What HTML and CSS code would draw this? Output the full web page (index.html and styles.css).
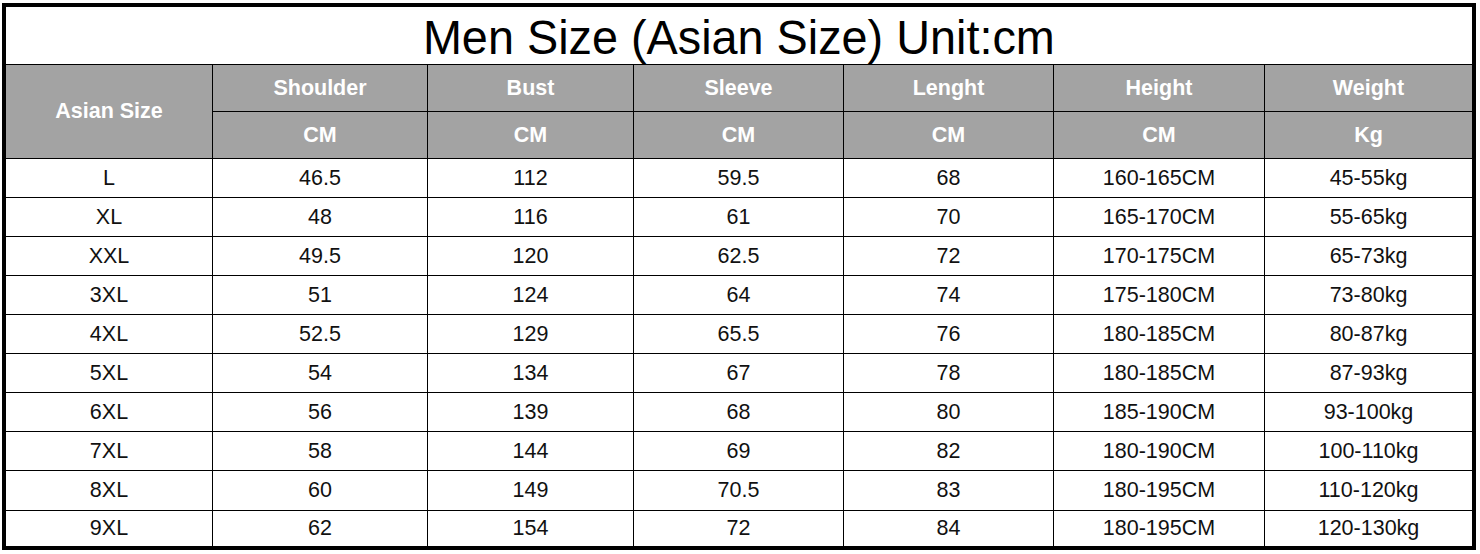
FILE: index.html
```html
<!DOCTYPE html>
<html lang="en">
<head>
<meta charset="utf-8">
<title>Men Size (Asian Size)</title>
<link rel="stylesheet" href="styles.css">
</head>
<body>
<div class="chart">
  <div class="title"><span class="title-text">Men Size (Asian Size) Unit:cm</span></div>
  <div class="hd size-hd">Asian Size</div>
  <div class="hd">Shoulder</div>
  <div class="hd">Bust</div>
  <div class="hd">Sleeve</div>
  <div class="hd">Lenght</div>
  <div class="hd">Height</div>
  <div class="hd">Weight</div>
  <div class="hd">CM</div>
  <div class="hd">CM</div>
  <div class="hd">CM</div>
  <div class="hd">CM</div>
  <div class="hd">CM</div>
  <div class="hd">Kg</div>

  <div class="c">L</div><div class="c">46.5</div><div class="c">112</div><div class="c">59.5</div><div class="c">68</div><div class="c">160-165CM</div><div class="c">45-55kg</div>
  <div class="c">XL</div><div class="c">48</div><div class="c">116</div><div class="c">61</div><div class="c">70</div><div class="c">165-170CM</div><div class="c">55-65kg</div>
  <div class="c">XXL</div><div class="c">49.5</div><div class="c">120</div><div class="c">62.5</div><div class="c">72</div><div class="c">170-175CM</div><div class="c">65-73kg</div>
  <div class="c">3XL</div><div class="c">51</div><div class="c">124</div><div class="c">64</div><div class="c">74</div><div class="c">175-180CM</div><div class="c">73-80kg</div>
  <div class="c">4XL</div><div class="c">52.5</div><div class="c">129</div><div class="c">65.5</div><div class="c">76</div><div class="c">180-185CM</div><div class="c">80-87kg</div>
  <div class="c">5XL</div><div class="c">54</div><div class="c">134</div><div class="c">67</div><div class="c">78</div><div class="c">180-185CM</div><div class="c">87-93kg</div>
  <div class="c">6XL</div><div class="c">56</div><div class="c">139</div><div class="c">68</div><div class="c">80</div><div class="c">185-190CM</div><div class="c">93-100kg</div>
  <div class="c">7XL</div><div class="c">58</div><div class="c">144</div><div class="c">69</div><div class="c">82</div><div class="c">180-190CM</div><div class="c">100-110kg</div>
  <div class="c">8XL</div><div class="c">60</div><div class="c">149</div><div class="c">70.5</div><div class="c">83</div><div class="c">180-195CM</div><div class="c">110-120kg</div>
  <div class="c">9XL</div><div class="c">62</div><div class="c">154</div><div class="c">72</div><div class="c">84</div><div class="c">180-195CM</div><div class="c">120-130kg</div>
</div>
</body>
</html>
```

FILE: styles.css
```css
html, body {
  margin: 0;
  padding: 0;
  background: #fff;
}

body {
  font-family: "Liberation Sans", Arial, sans-serif;
}

.chart {
  display: grid;
  grid-template-columns: 206px 214px 205px 209px 209px 210px 207px;
  grid-template-rows: 57px 46px 46px repeat(8, 38px) 39px 35px;
  gap: 1px;
  width: max-content;
  margin: 3px 0 0 2px;
  border: 4px solid #000;
  background: #000;
}

.title {
  grid-column: 1 / -1;
  background: #fff;
  display: flex;
  align-items: center;
  justify-content: center;
  padding-top: 3px;
  color: #000;
}

.title-text {
  display: inline-block;
  font-size: 49px;
  transform: scaleX(0.955);
  white-space: nowrap;
}

.hd {
  background: #a3a3a3;
  color: #fff;
  font-weight: bold;
  font-size: 21.5px;
  display: flex;
  align-items: center;
  justify-content: center;
}

.size-hd {
  grid-row: span 2;
}

.c {
  background: #fff;
  color: #111;
  font-size: 21.5px;
  display: flex;
  align-items: center;
  justify-content: center;
}
```
